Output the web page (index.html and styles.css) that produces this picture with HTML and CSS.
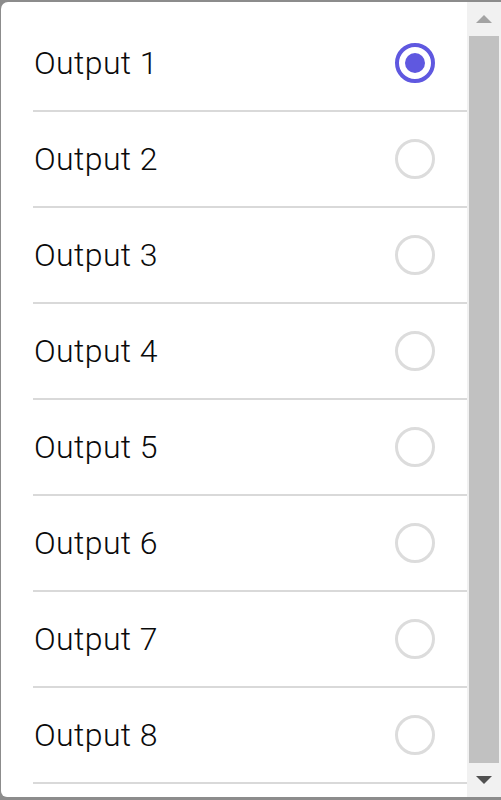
FILE: index.html
```html
<!DOCTYPE html>
<html lang="en">
<head>
<meta charset="utf-8">
<title>Outputs</title>
<link rel="stylesheet" href="styles.css">
</head>
<body>
<div class="dialog">
  <ul class="list">
    <li class="row"><span class="label">Output 1</span><span class="radio checked"></span></li>
    <li class="row"><span class="label">Output 2</span><span class="radio"></span></li>
    <li class="row"><span class="label">Output 3</span><span class="radio"></span></li>
    <li class="row"><span class="label">Output 4</span><span class="radio"></span></li>
    <li class="row"><span class="label">Output 5</span><span class="radio"></span></li>
    <li class="row"><span class="label">Output 6</span><span class="radio"></span></li>
    <li class="row"><span class="label">Output 7</span><span class="radio"></span></li>
    <li class="row"><span class="label">Output 8</span><span class="radio"></span></li>
  </ul>
  <div class="scrollbar">
    <div class="sb-btn"><span class="arrow up"></span></div>
    <div class="thumb"></div>
    <div class="sb-btn"><span class="arrow down"></span></div>
  </div>
</div>
</body>
</html>
```

FILE: styles.css
```css
html, body {
  margin: 0;
  padding: 0;
  height: 800px;
  overflow: hidden;
}
body {
  background: #8c8c8c;
  font-family: Roboto, "Liberation Sans", sans-serif;
}
.dialog {
  margin: 2px 0 3px 1px;
  height: 795px;
  background: #ffffff;
  border-radius: 7px 0 0 6px;
  display: flex;
  overflow: hidden;
}
.list {
  flex: 1;
  list-style: none;
  margin: 0;
  padding: 14px 0 0 32px;
}
.row {
  height: 94px;
  border-bottom: 2px solid #d9d9d9;
  display: flex;
  align-items: center;
  justify-content: space-between;
  padding-right: 32px;
}
.label {
  font-size: 32px;
  font-weight: 300;
  color: #0a0a0a;
  padding-left: 1px;
  letter-spacing: 0.4px;
}
.radio {
  width: 34px;
  height: 34px;
  border: 3px solid #dcdcdc;
  border-radius: 50%;
  box-sizing: content-box;
  display: flex;
  align-items: center;
  justify-content: center;
}
.radio.checked {
  width: 32px;
  height: 32px;
  border: 4px solid #5f58e0;
}
.radio.checked::after {
  content: "";
  width: 20px;
  height: 20px;
  border-radius: 50%;
  background: #5f58e0;
}
.scrollbar {
  width: 34px;
  background: #f1f1f1;
  display: flex;
  flex-direction: column;
}
.sb-btn {
  height: 34px;
  display: flex;
  align-items: center;
  justify-content: center;
}
.thumb {
  flex: 1;
  margin: 0 2px;
  background: #c1c1c1;
}
.arrow {
  width: 0;
  height: 0;
  border-left: 8px solid transparent;
  border-right: 8px solid transparent;
}
.arrow.up {
  border-bottom: 8px solid #a3a3a3;
}
.arrow.down {
  border-top: 8px solid #505050;
}
```
